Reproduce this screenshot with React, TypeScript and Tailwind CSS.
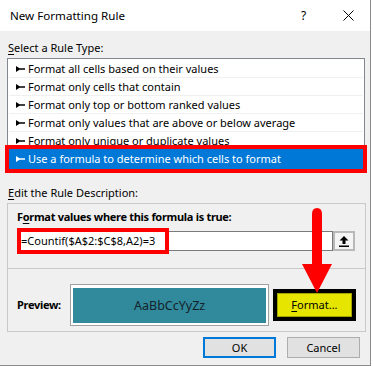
import React from "react";

const rules = [
  "Format all cells based on their values",
  "Format only cells that contain",
  "Format only top or bottom ranked values",
  "Format only values that are above or below average",
  "Format only unique or duplicate values",
];

function Pin({ color = "#000" }: { color?: string }) {
  return (
    <svg width="9" height="6" viewBox="0 0 9 6" className="shrink-0">
      <polygon points="0,0 3.5,2.3 9,2.3 9,3.7 3.5,3.7 0,6" fill={color} />
    </svg>
  );
}

function RuleRow({ text, selected }: { text: string; selected?: boolean }) {
  if (selected) {
    return (
      <div className="-mt-px h-[20px] flex items-center gap-[3px] pl-[7px] bg-[#0078d7] text-white outline-4 outline-[#ff0000]">
        <Pin color="#fff" />
        <span>{text}</span>
      </div>
    );
  }
  return (
    <div className="h-[18px] flex items-center gap-[3px] pl-[7px] border-b border-[#f0f0f0]">
      <Pin />
      <span>{text}</span>
    </div>
  );
}

export default function App() {
  return (
    <div className="w-[373px] h-[366px] bg-white relative overflow-hidden text-[11px] leading-[16px] text-black font-['Noto_Sans',sans-serif]">
      <div className="w-[371px] h-[366px] flex flex-col border-r border-b border-[#8a8a8a]">
        {/* title bar */}
        <div className="h-[31px] shrink-0 bg-white flex items-center pl-[10px]">
          <span className="flex-1 text-[11.6px]">New Formatting Rule</span>
          <span className="w-[10px] text-[12px] mr-[32px]">?</span>
          <svg width="11" height="11" viewBox="0 0 11 11" className="mr-[16px]">
            <path d="M0.5 0.5 L10.5 10.5 M10.5 0.5 L0.5 10.5" stroke="#000" strokeWidth="1" />
          </svg>
        </div>

        <div className="flex-1 bg-[#f0f0f0] flex flex-col pt-[9px]">
          <div className="pl-[8px] h-[16px]">
            <u className="underline-offset-2">S</u>elect a Rule Type:
          </div>

          <div className="mt-[2px] ml-[7px] w-[358px] h-[115px] bg-white border border-[#828790] pt-[1px] px-[1px]">
            {rules.map((r) => (
              <RuleRow key={r} text={r} />
            ))}
            <RuleRow text="Use a formula to determine which cells to format" selected />
          </div>

          <div className="mt-[12px] pl-[8px] h-[16px]">
            <u className="underline-offset-2">E</u>dit the Rule Description:
          </div>

          <div className="mt-[2px] ml-[7px] w-[359px] h-[129px] border border-[#c8c8c8] flex flex-col pt-[5px] px-[9px]">
            <div className="h-[16px] font-bold tracking-[-0.3px]">
              F<u className="underline-offset-2">o</u>rmat values where this formula is true:
            </div>

            <div className="mt-[6px] ml-[2px] flex">
              <div className="relative w-[314px] h-[20px] bg-white border border-[#7a7a7a] flex items-center pl-[1px]">
                <span>=Countif($A$2:$C$8,A2)=3</span>
                <div className="absolute -left-[3px] -top-[4px] w-[152px] h-[26px] border-4 border-[#ff0000]" />
              </div>
              <div className="w-[22px] h-[20px] border-2 border-[#b9b9b9] bg-[#f4f4f4] flex items-center justify-center">
                <svg width="10" height="11" viewBox="0 0 10 11">
                  <polygon points="5,0 9.5,4.5 6.5,4.5 6.5,8 3.5,8 3.5,4.5 0.5,4.5" fill="#000" />
                  <rect x="0" y="9.5" width="10" height="1.5" fill="#000" />
                </svg>
              </div>
            </div>

            <div className="mt-[17px] -mx-[9px] border-t border-[#c8c8c8]" />

            <div className="mt-[15px] flex items-center">
              <div className="w-[54px] font-bold tracking-[-0.3px]">Preview:</div>
              <div className="w-[201px] h-[42px] border border-[#a0a0a0] bg-white pt-[3px] pb-[2px] px-[2px]">
                <div className="h-full bg-[#318a9b] flex items-center justify-center text-[12.5px] text-[#14222b]">
                  AaBbCcYyZz
                </div>
              </div>
              <div className="ml-[4px] w-[84px] h-[32px] border-4 border-black bg-[#e5e500] flex items-center justify-center">
                <div className="w-full h-full border border-[#a5a500] flex items-center justify-center">
                  <span>
                    <u className="underline-offset-2">F</u>ormat...
                  </span>
                </div>
              </div>
            </div>
          </div>

          <div className="mt-[5px] flex pl-[203px] gap-[11px]">
            <div className="w-[73px] h-[21px] border-2 border-[#0078d7] bg-[#e1e1e1] flex items-center justify-center">
              OK
            </div>
            <div className="w-[73px] h-[21px] border border-[#adadad] bg-[#e1e1e1] flex items-center justify-center">
              Cancel
            </div>
          </div>
        </div>
      </div>

      {/* red annotation arrow */}
      <svg className="absolute left-[300px] top-[206px]" width="36" height="90" viewBox="0 0 36 90">
        <path d="M12 8 Q12 2 17 2 Q22 2 22 8 L22 58 L32 58 L17 87 L2 58 L12 58 Z" fill="#ff0000" />
      </svg>
    </div>
  );
}
